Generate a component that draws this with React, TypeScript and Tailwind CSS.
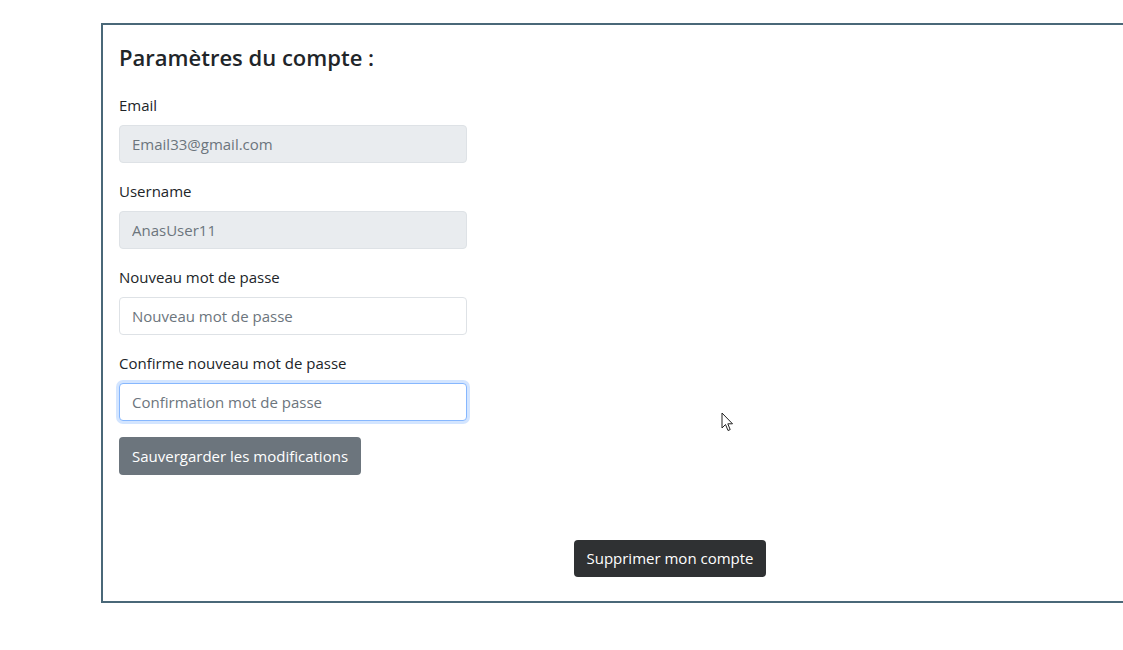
import React from "react";

const font = { fontFamily: '"Open Sans", "Noto Sans", sans-serif' };

function Field({ label, value, placeholder, readOnly, focused }: { label: string; value?: string; placeholder?: string; readOnly?: boolean; focused?: boolean }) {
  return (
    <div className="mb-4 flex flex-col">
      <label className="mb-2 text-[15px] leading-6 text-[#212529]">{label}</label>
      <input
        readOnly
        value={value ?? ""}
        placeholder={placeholder}
        className={
          "h-[38px] w-[348px] rounded-[4px] border px-3 text-[15px] text-[#6c757d] placeholder:text-[#6c757d] outline-none " +
          (readOnly ? "border-[#dee2e6] bg-[#e9ecef] " : "bg-white ") +
          (focused ? "border-[#86b7fe] shadow-[0_0_0_3px_rgba(13,110,253,0.18)]" : readOnly ? "" : "border-[#dee2e6]")
        }
      />
    </div>
  );
}

export default function App() {
  return (
    <div className="relative h-[650px] w-[1123px] overflow-hidden bg-white" style={font}>
      <div className="ml-[101px] mt-[23px] flex h-[580px] w-[1138px] flex-col border-2 border-[#4a6878] px-4 pt-[18px] pb-[24px]">
        <h2 className="mb-[22px] text-[22px] font-semibold leading-[28px] text-[#212529]">Paramètres du compte :</h2>
        <Field label="Email" value="Email33@gmail.com" readOnly />
        <Field label="Username" value="AnasUser11" readOnly />
        <Field label="Nouveau mot de passe" placeholder="Nouveau mot de passe" />
        <Field label="Confirme nouveau mot de passe" placeholder="Confirmation mot de passe" focused />
        <div>
          <button className="h-[38px] rounded-[4px] bg-[#6c757d] px-[13px] text-[15px] text-white">Sauvergarder les modifications</button>
        </div>
        <div className="mt-auto flex justify-center">
          <button className="h-[37px] rounded-[4px] bg-[#2f3133] px-3 text-[15px] text-white">Supprimer mon compte</button>
        </div>
      </div>
      <svg className="absolute left-[721px] top-[412px]" width="14" height="21" viewBox="0 0 14 21">
        <path d="M1 1 L1 16 L4.5 12.5 L7 18.5 L9.2 17.6 L6.8 11.8 L11.5 11.8 Z" fill="white" stroke="#222" strokeWidth="1" strokeLinejoin="round" />
      </svg>
    </div>
  );
}
